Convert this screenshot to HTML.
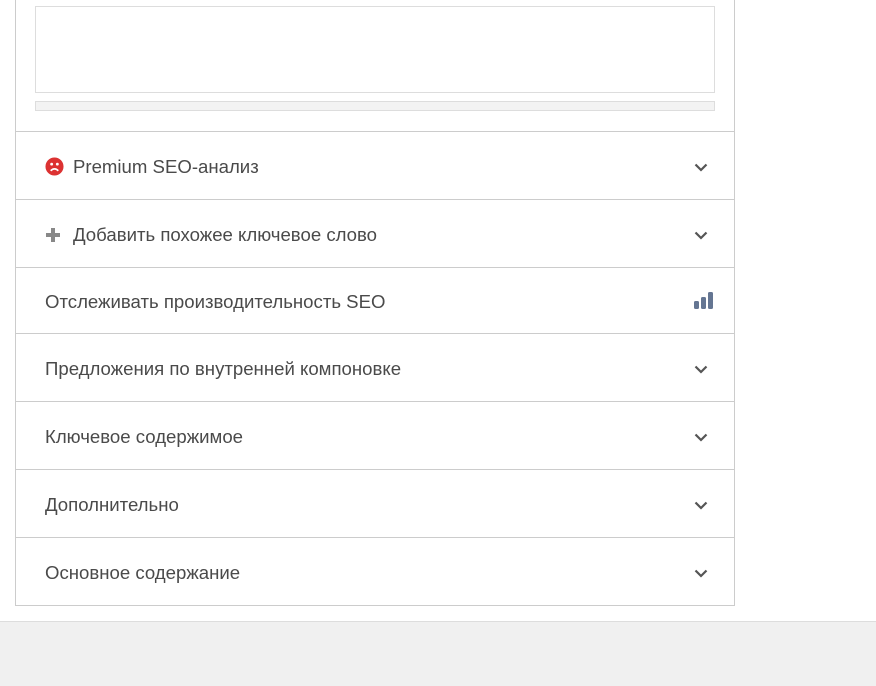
<!DOCTYPE html>
<html><head><meta charset="utf-8"><style>
*{margin:0;padding:0;box-sizing:border-box}
body{width:876px;height:686px;background:#fff;position:relative;overflow:hidden;font-family:"Liberation Sans","DejaVu Sans",sans-serif;color:#4a4a4a}
.panel{position:absolute;left:15px;top:-1px;width:720px;height:607px;border:1px solid #ccc;border-top:none}
.ta{position:absolute;left:35px;top:6px;width:680px;height:87px;border:1px solid #ddd;background:#fff}
.bar{position:absolute;left:35px;top:101px;width:680px;height:10px;border:1px solid #ddd;background:#f3f3f3}
.row{position:absolute;left:16px;width:718px;border-top:1px solid #ccc;font-size:18.6px;display:flex;align-items:center;padding-left:29px;padding-top:2px}
.chev{position:absolute;right:26px;top:50%;margin-top:-3px}
.foot{position:absolute;left:0;top:621px;width:876px;height:65px;background:#f0f0f0;border-top:1px solid #ddd}
</style></head><body>
<div class="panel"></div>
<div class="ta"></div>
<div class="bar"></div>

<div class="row" style="top:131px;height:68px"><svg width="19" height="19" viewBox="0 0 20 20" style="margin-right:9px"><circle cx="10" cy="10" r="9.5" fill="#dc3232"/><circle cx="7" cy="7.5" r="1.5" fill="#fff"/><circle cx="13" cy="7.5" r="1.5" fill="#fff"/><path d="M6 14.5q4-4 8 0" stroke="#fff" stroke-width="1.8" fill="none"/></svg>Premium SEO-анализ<svg class="chev" width="14" height="9" viewBox="0 0 14 9"><path d="M1.5 1.5l5.5 5.5 5.5-5.5" stroke="#555" stroke-width="2.2" fill="none"/></svg></div>

<div class="row" style="top:199px;height:68px"><svg width="16" height="16" viewBox="0 0 16 16" style="margin-right:12px"><path d="M8 1v14M1 8h14" stroke="#888" stroke-width="4"/></svg>Добавить похожее ключевое слово<svg class="chev" width="14" height="9" viewBox="0 0 14 9"><path d="M1.5 1.5l5.5 5.5 5.5-5.5" stroke="#555" stroke-width="2.2" fill="none"/></svg></div>

<div class="row" style="top:267px;height:66px">Отслеживать производительность SEO<svg style="position:absolute;right:20px;top:24px" width="20" height="17" viewBox="0 0 20 17"><rect x="0" y="9" width="5" height="8" rx="1.5" fill="#647592"/><rect x="7" y="5" width="5" height="12" rx="1.5" fill="#647592"/><rect x="14" y="0" width="5" height="17" rx="1.5" fill="#647592"/></svg></div>

<div class="row" style="top:333px;height:68px">Предложения по внутренней компоновке<svg class="chev" width="14" height="9" viewBox="0 0 14 9"><path d="M1.5 1.5l5.5 5.5 5.5-5.5" stroke="#555" stroke-width="2.2" fill="none"/></svg></div>

<div class="row" style="top:401px;height:68px">Ключевое содержимое<svg class="chev" width="14" height="9" viewBox="0 0 14 9"><path d="M1.5 1.5l5.5 5.5 5.5-5.5" stroke="#555" stroke-width="2.2" fill="none"/></svg></div>

<div class="row" style="top:469px;height:68px">Дополнительно<svg class="chev" width="14" height="9" viewBox="0 0 14 9"><path d="M1.5 1.5l5.5 5.5 5.5-5.5" stroke="#555" stroke-width="2.2" fill="none"/></svg></div>

<div class="row" style="top:537px;height:68px">Основное содержание<svg class="chev" width="14" height="9" viewBox="0 0 14 9"><path d="M1.5 1.5l5.5 5.5 5.5-5.5" stroke="#555" stroke-width="2.2" fill="none"/></svg></div>

<div class="foot"></div>
</body></html>
